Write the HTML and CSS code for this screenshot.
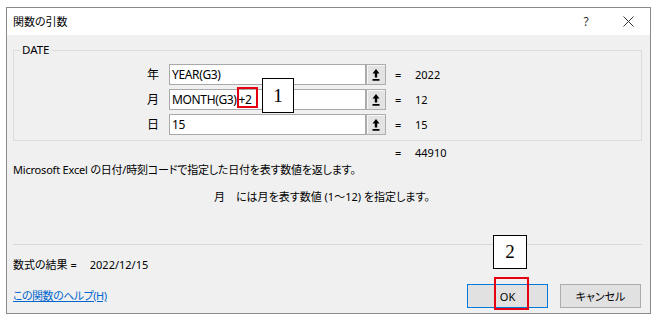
FILE: index.html
```html
<!DOCTYPE html>
<html>
<head>
    <title>関数の引数</title>
    <link rel="stylesheet" href="styles.css">
</head>
<body>
    <div class="dialog">
        <div class="titlebar">
            <span class="title">関数の引数</span>
            <span class="help-mark">?</span>
            <span class="close">
                <svg width="11" height="11" viewBox="0 0 11 11"><path d="M0.5 0.5 L10.5 10.5 M10.5 0.5 L0.5 10.5" stroke="#333" stroke-width="1"/></svg>
            </span>
        </div>
        <div class="content">
            <fieldset class="group">
                <legend>DATE</legend>
                <div class="arg-row">
                    <span class="arg-label">年</span>
                    <div class="arg-input">YEAR(G3)</div>
                    <button class="ref-btn"><svg width="8" height="12" viewBox="0 0 8 12"><path d="M4 0 L7.5 4.5 H5.2 V8.5 H2.8 V4.5 H0.5 Z M0.5 10 H7.5 V11.8 H0.5 Z" fill="#000"/></svg></button>
                    <span class="eq">=</span>
                    <span class="arg-value">2022</span>
                </div>
                <div class="arg-row">
                    <span class="arg-label">月</span>
                    <div class="arg-input">MONTH(G3)<span class="added">+2</span></div>
                    <button class="ref-btn"><svg width="8" height="12" viewBox="0 0 8 12"><path d="M4 0 L7.5 4.5 H5.2 V8.5 H2.8 V4.5 H0.5 Z M0.5 10 H7.5 V11.8 H0.5 Z" fill="#000"/></svg></button>
                    <span class="eq">=</span>
                    <span class="arg-value">12</span>
                </div>
                <div class="arg-row">
                    <span class="arg-label">日</span>
                    <div class="arg-input">15</div>
                    <button class="ref-btn"><svg width="8" height="12" viewBox="0 0 8 12"><path d="M4 0 L7.5 4.5 H5.2 V8.5 H2.8 V4.5 H0.5 Z M0.5 10 H7.5 V11.8 H0.5 Z" fill="#000"/></svg></button>
                    <span class="eq">=</span>
                    <span class="arg-value">15</span>
                </div>
            </fieldset>

            <div class="total"><span class="eq">=</span><span>44910</span></div>
            <p class="desc">Microsoft Excel の日付/時刻コードで指定した日付を表す数値を返します。</p>
            <p class="arg-desc"><span class="arg-name">月</span>には月を表す数値 (1～12) を指定します。</p>

            <div class="separator"></div>
            <div class="result">数式の結果 =<span class="result-value">2022/12/15</span></div>

            <div class="footer">
                <a class="help-link" href="#">この関数のヘルプ(H)</a>
                <div class="buttons">
                    <button class="btn btn-default">OK</button>
                    <button class="btn">キャンセル</button>
                </div>
            </div>
        </div>
    </div>

    <!-- annotations drawn over the screenshot -->
    <div class="mark mark-plus"></div>
    <div class="callout callout-1">1</div>
    <div class="callout callout-2">2</div>
    <div class="mark mark-ok"></div>
</body>
</html>
```

FILE: styles.css
```css
* {
    box-sizing: border-box;
}

body {
    margin: 0;
    background: #fff;
    font-family: "Noto Sans", "Noto Sans CJK JP", sans-serif;
    font-size: 11px;
    line-height: 14px;
    color: #000;
    font-feature-settings: "palt";
    position: relative;
    height: 321px;
    overflow: hidden;
}

.dialog {
    margin: 7px 0 0 6px;
    width: 645px;
    height: 307px;
    border: 1px solid #8a8a8a;
    background: #f0f0f0;
    display: flex;
    flex-direction: column;
}

.titlebar {
    height: 27px;
    flex: none;
    background: #fff;
    display: flex;
    align-items: center;
    padding-left: 6px;
}

.title {
    flex: 1;
    font-size: 11px;
}

.help-mark {
    width: 12px;
    text-align: center;
    color: #333;
    font-size: 12px;
    margin-right: 28px;
}

.close {
    width: 16px;
    display: flex;
    justify-content: center;
    margin-right: 14px;
}

.content {
    flex: 1;
    padding: 0 8px 0 6px;
    display: flex;
    flex-direction: column;
}

.group {
    margin: 8px 0 0 0;
    padding: 7px 0 5px 0;
    border: 1px solid #dcdcdc;
    min-width: 0;
}

.group legend {
    margin-left: 6px;
    padding: 0 2px;
    line-height: 14px;
    font-size: 11.5px;
}

.arg-row {
    display: flex;
    align-items: center;
    height: 21px;
    margin-bottom: 4px;
}

.arg-row:last-child {
    margin-bottom: 0;
}

.arg-label {
    width: 145px;
    text-align: right;
    margin-right: 10px;
    font-size: 12px;
}

.arg-input {
    width: 197px;
    height: 21px;
    border: 1px solid #a9a9a9;
    background: #fff;
    padding-left: 2px;
    font-size: 12px;
    line-height: 19px;
    letter-spacing: -0.35px;
}

.added {
    margin-left: 2px;
}

.ref-btn {
    width: 20px;
    height: 21px;
    padding: 0;
    border: 1px solid #adadad;
    background: #e3e3e3;
    box-shadow: inset 1px 1px 0 #f7f7f7;
    display: flex;
    align-items: center;
    justify-content: center;
}

.eq {
    width: 29px;
    padding-left: 9px;
}

.total {
    display: flex;
    margin: 5px 0 0 373px;
}

.desc {
    margin: 3px 0 0 0;
    letter-spacing: -0.2px;
}

.arg-desc {
    margin: 13px 0 0 0;
    padding-left: 201px;
}

.arg-name {
    margin-right: 11px;
}

.separator {
    margin-top: 40px;
    border-top: 1px solid #d9d9d9;
}

.result {
    margin-top: 13px;
}

.result-value {
    margin-left: 13px;
}

.footer {
    margin-top: 12px;
    display: flex;
    align-items: center;
    justify-content: space-between;
}

.help-link {
    color: #0066cc;
    text-decoration: underline;
    letter-spacing: -0.5px;
}

.buttons {
    display: flex;
    gap: 12px;
    margin-right: 1px;
}

.btn {
    width: 81px;
    height: 24px;
    padding: 0;
    border: 1px solid #adadad;
    background: #e1e1e1;
    font-family: "Noto Sans", "Noto Sans CJK JP", sans-serif;
    font-size: 11px;
    font-feature-settings: "palt";
    color: #000;
}

.btn-default {
    border-color: #0078d7;
}

.mark {
    position: absolute;
    border: 2px solid #e60012;
}

.mark-plus {
    left: 237px;
    top: 87px;
    width: 21px;
    height: 21px;
}

.mark-ok {
    left: 494px;
    top: 277px;
    width: 35px;
    height: 33px;
}

.callout {
    position: absolute;
    background: #fff;
    border: 1px solid #000;
    font-family: "Liberation Serif", serif;
    font-size: 19px;
    display: flex;
    align-items: center;
    justify-content: center;
}

.callout-1 {
    left: 262px;
    top: 78px;
    width: 32px;
    height: 35px;
}

.callout-2 {
    left: 493px;
    top: 235px;
    width: 34px;
    height: 34px;
}
```
